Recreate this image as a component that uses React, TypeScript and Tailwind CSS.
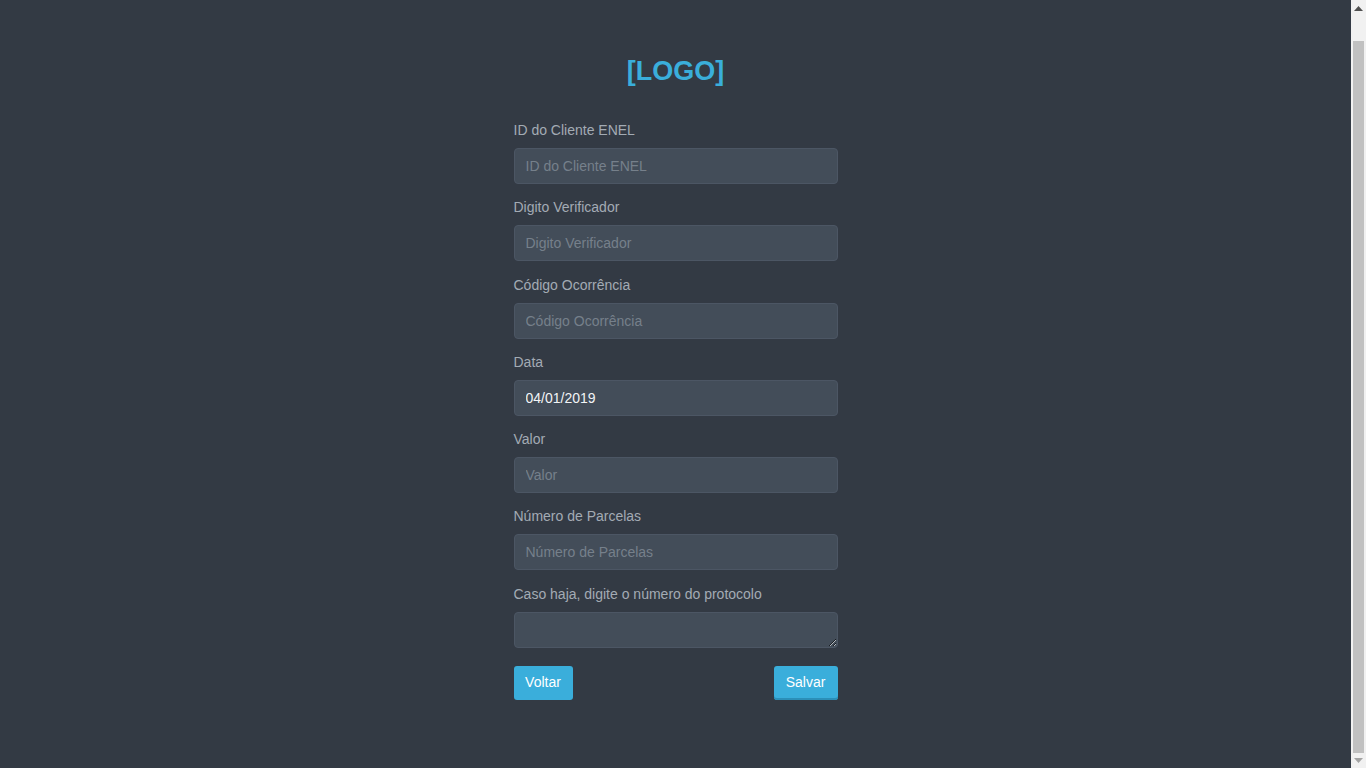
import React from 'react';

const fields = [
  { label: 'ID do Cliente ENEL', placeholder: 'ID do Cliente ENEL' },
  { label: 'Digito Verificador', placeholder: 'Digito Verificador' },
  { label: 'Código Ocorrência', placeholder: 'Código Ocorrência' },
  { label: 'Data', placeholder: 'Data', value: '04/01/2019' },
  { label: 'Valor', placeholder: 'Valor' },
  { label: 'Número de Parcelas', placeholder: 'Número de Parcelas' },
];

function Scrollbar() {
  return (
    <div className="w-[15px] h-screen shrink-0 bg-[#f1f1f1] flex flex-col items-center">
      <div className="h-[17px] w-full flex items-center justify-center">
        <svg width="9" height="5" viewBox="0 0 9 5"><path d="M4.5 0L9 5H0z" fill="#505050" /></svg>
      </div>
      <div className="mt-[24px] w-[11px] h-[712px] bg-[#c1c1c1]" />
      <div className="flex-1 w-full flex items-center justify-center">
        <svg width="9" height="5" viewBox="0 0 9 5"><path d="M0 0H9L4.5 5z" fill="#a3a3a3" /></svg>
      </div>
    </div>
  );
}

export default function App() {
  return (
    <div className="h-screen flex bg-[#333a44] font-['Liberation_Sans',Arial,sans-serif] text-[14px] overflow-hidden">
      <div className="flex-1 h-screen overflow-hidden">
        <div className="w-[324px] mx-auto pt-[54px]">
          <h1 className="text-center text-[27px] leading-[34px] font-bold text-[#3aaedb]">[LOGO]</h1>

          <form className="mt-[32px]" onSubmit={(e) => e.preventDefault()}>
            {fields.map((f) => (
              <div key={f.label} className="mb-[13.29px]">
                <label className="block leading-[21px] mb-[7px] text-[#a3abb4]">{f.label}</label>
                <input
                  type="text"
                  placeholder={f.placeholder}
                  defaultValue={f.value}
                  className="block w-full h-[36px] px-[11px] rounded-[4px] bg-[#434d59] border border-[#4c5664] text-[#f2f4f6] placeholder:text-[#76808b] outline-none"
                />
              </div>
            ))}

            <div className="mb-[18px]">
              <label className="block leading-[21px] mb-[7px] text-[#a3abb4]">Caso haja, digite o número do protocolo</label>
              <textarea
                rows={1}
                className="block w-full h-[36px] px-[11px] py-[6px] rounded-[4px] bg-[#434d59] border border-[#4c5664] text-[#f2f4f6] outline-none"
              />
            </div>

            <div className="flex justify-between">
              <button type="button" className="h-[34px] w-[59px] rounded-[3px] bg-[#3aaedb] text-white">
                Voltar
              </button>
              <button type="submit" className="h-[34px] w-[64px] rounded-[3px] bg-[#3aaedb] shadow-[inset_0_-2px_0_#2b8fb8] text-white">
                Salvar
              </button>
            </div>
          </form>
        </div>
      </div>
      <Scrollbar />
    </div>
  );
}
